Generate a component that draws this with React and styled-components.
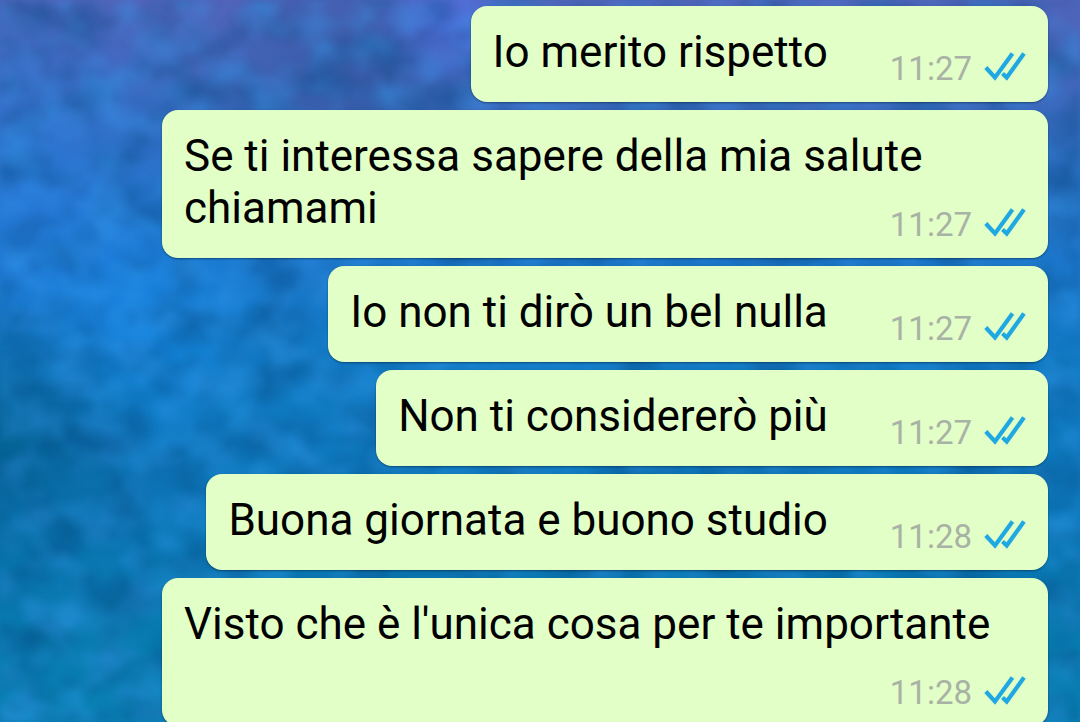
import React from 'react';
import styled, { createGlobalStyle } from 'styled-components';

const GlobalStyle = createGlobalStyle`
  body {
    margin: 0;
    background: #1273c2;
    font-family: Roboto, "Liberation Sans", sans-serif;
  }
`;

const Chat = styled.main`
  position: relative;
  height: 100vh;
  overflow: hidden;
`;

const Wallpaper = styled.div`
  position: absolute;
  inset: 0;
  background:
    radial-gradient(circle at 0% 62%, rgba(0, 84, 122, 0.6), transparent 14%),
    radial-gradient(circle at 3% 28%, rgba(40, 130, 235, 0.5), transparent 18%),
    radial-gradient(circle at 13% 44%, rgba(22, 140, 235, 0.6), transparent 14%),
    radial-gradient(circle at 32% 10%, rgba(50, 80, 150, 0.6), transparent 14%),
    radial-gradient(circle at 41% 3%, rgba(84, 116, 235, 0.8), transparent 8%),
    linear-gradient(
      to bottom,
      #5064ba 0%,
      #4068bc 12%,
      #2c6ec2 24%,
      #1c76ca 36%,
      #117ac4 50%,
      #0d78ba 70%,
      #087aae 88%,
      #0a82b6 100%
    );
`;

const Texture = styled.svg`
  display: block;
  width: 100%;
  height: 100%;
`;

const Messages = styled.ol`
  position: relative;
  display: flex;
  flex-direction: column;
  align-items: flex-end;
  gap: 8px;
  margin: 0;
  padding: 6px 32px;
  list-style: none;
`;

const Bubble = styled.li`
  display: flow-root;
  box-sizing: border-box;
  max-width: 886px;
  padding: 20px 22px 13px;
  border-radius: 16px;
  background: #e1ffc7;
  box-shadow: 0 1px 2px rgba(0, 30, 50, 0.5);
  color: #000;
  font-size: 44px;
  line-height: 52px;
`;

const Meta = styled.span`
  float: right;
  display: flex;
  align-items: center;
  gap: 12px;
  margin: 23px 0 0 62px;
  color: #a9b2a5;
  font-size: 33px;
  line-height: 40px;
`;

const Ticks = styled.svg`
  width: 42px;
  height: 34px;
`;

const messages = [
  { text: 'Io merito rispetto', time: '11:27' },
  { text: 'Se ti interessa sapere della mia salute chiamami', time: '11:27' },
  { text: 'Io non ti dirò un bel nulla', time: '11:27' },
  { text: 'Non ti considererò più', time: '11:27' },
  { text: 'Buona giornata e buono studio', time: '11:28' },
  { text: "Visto che è l'unica cosa per te importante", time: '11:28' },
];

function ReadTicks() {
  return <Ticks viewBox="0 0 42 34" fill="none" stroke="#1fa8e2" strokeWidth="4.2" role="img" aria-label="Letto">
    <path d="M1.8 15.5 L11 25.5 L28.5 1.5" />
    <path d="M18.5 21.5 L22.7 25.5 L40 1.5" />
  </Ticks>;
}

function PaintTexture() {
  return <Texture aria-hidden="true">
    <filter id="dark" x="0" y="0" width="100%" height="100%" colorInterpolationFilters="sRGB">
      <feTurbulence type="fractalNoise" baseFrequency="0.02 0.026" numOctaves="3" seed="8" />
      <feColorMatrix values="0 0 0 0 0.02  0 0 0 0 0.28  0 0 0 0 0.5  1 0 0 0 -0.38" />
      <feGaussianBlur stdDeviation="3" />
    </filter>
    <filter id="light" x="0" y="0" width="100%" height="100%" colorInterpolationFilters="sRGB">
      <feTurbulence type="fractalNoise" baseFrequency="0.024 0.03" numOctaves="3" seed="21" />
      <feColorMatrix values="0 0 0 0 0.22  0 0 0 0 0.62  0 0 0 0 0.95  1 0 0 0 -0.4" />
      <feGaussianBlur stdDeviation="3" />
    </filter>
    <rect width="100%" height="100%" filter="url(#dark)" />
    <rect width="100%" height="100%" filter="url(#light)" />
  </Texture>;
}

export default function App() {
  return <Chat>
    <GlobalStyle />
    <Wallpaper>
      <PaintTexture />
    </Wallpaper>
    <Messages>
      {messages.map(({ text, time }) => <Bubble key={text}>
        {text}
        <Meta>
          <time>{time}</time>
          <ReadTicks />
        </Meta>
      </Bubble>)}
    </Messages>
  </Chat>;
}
